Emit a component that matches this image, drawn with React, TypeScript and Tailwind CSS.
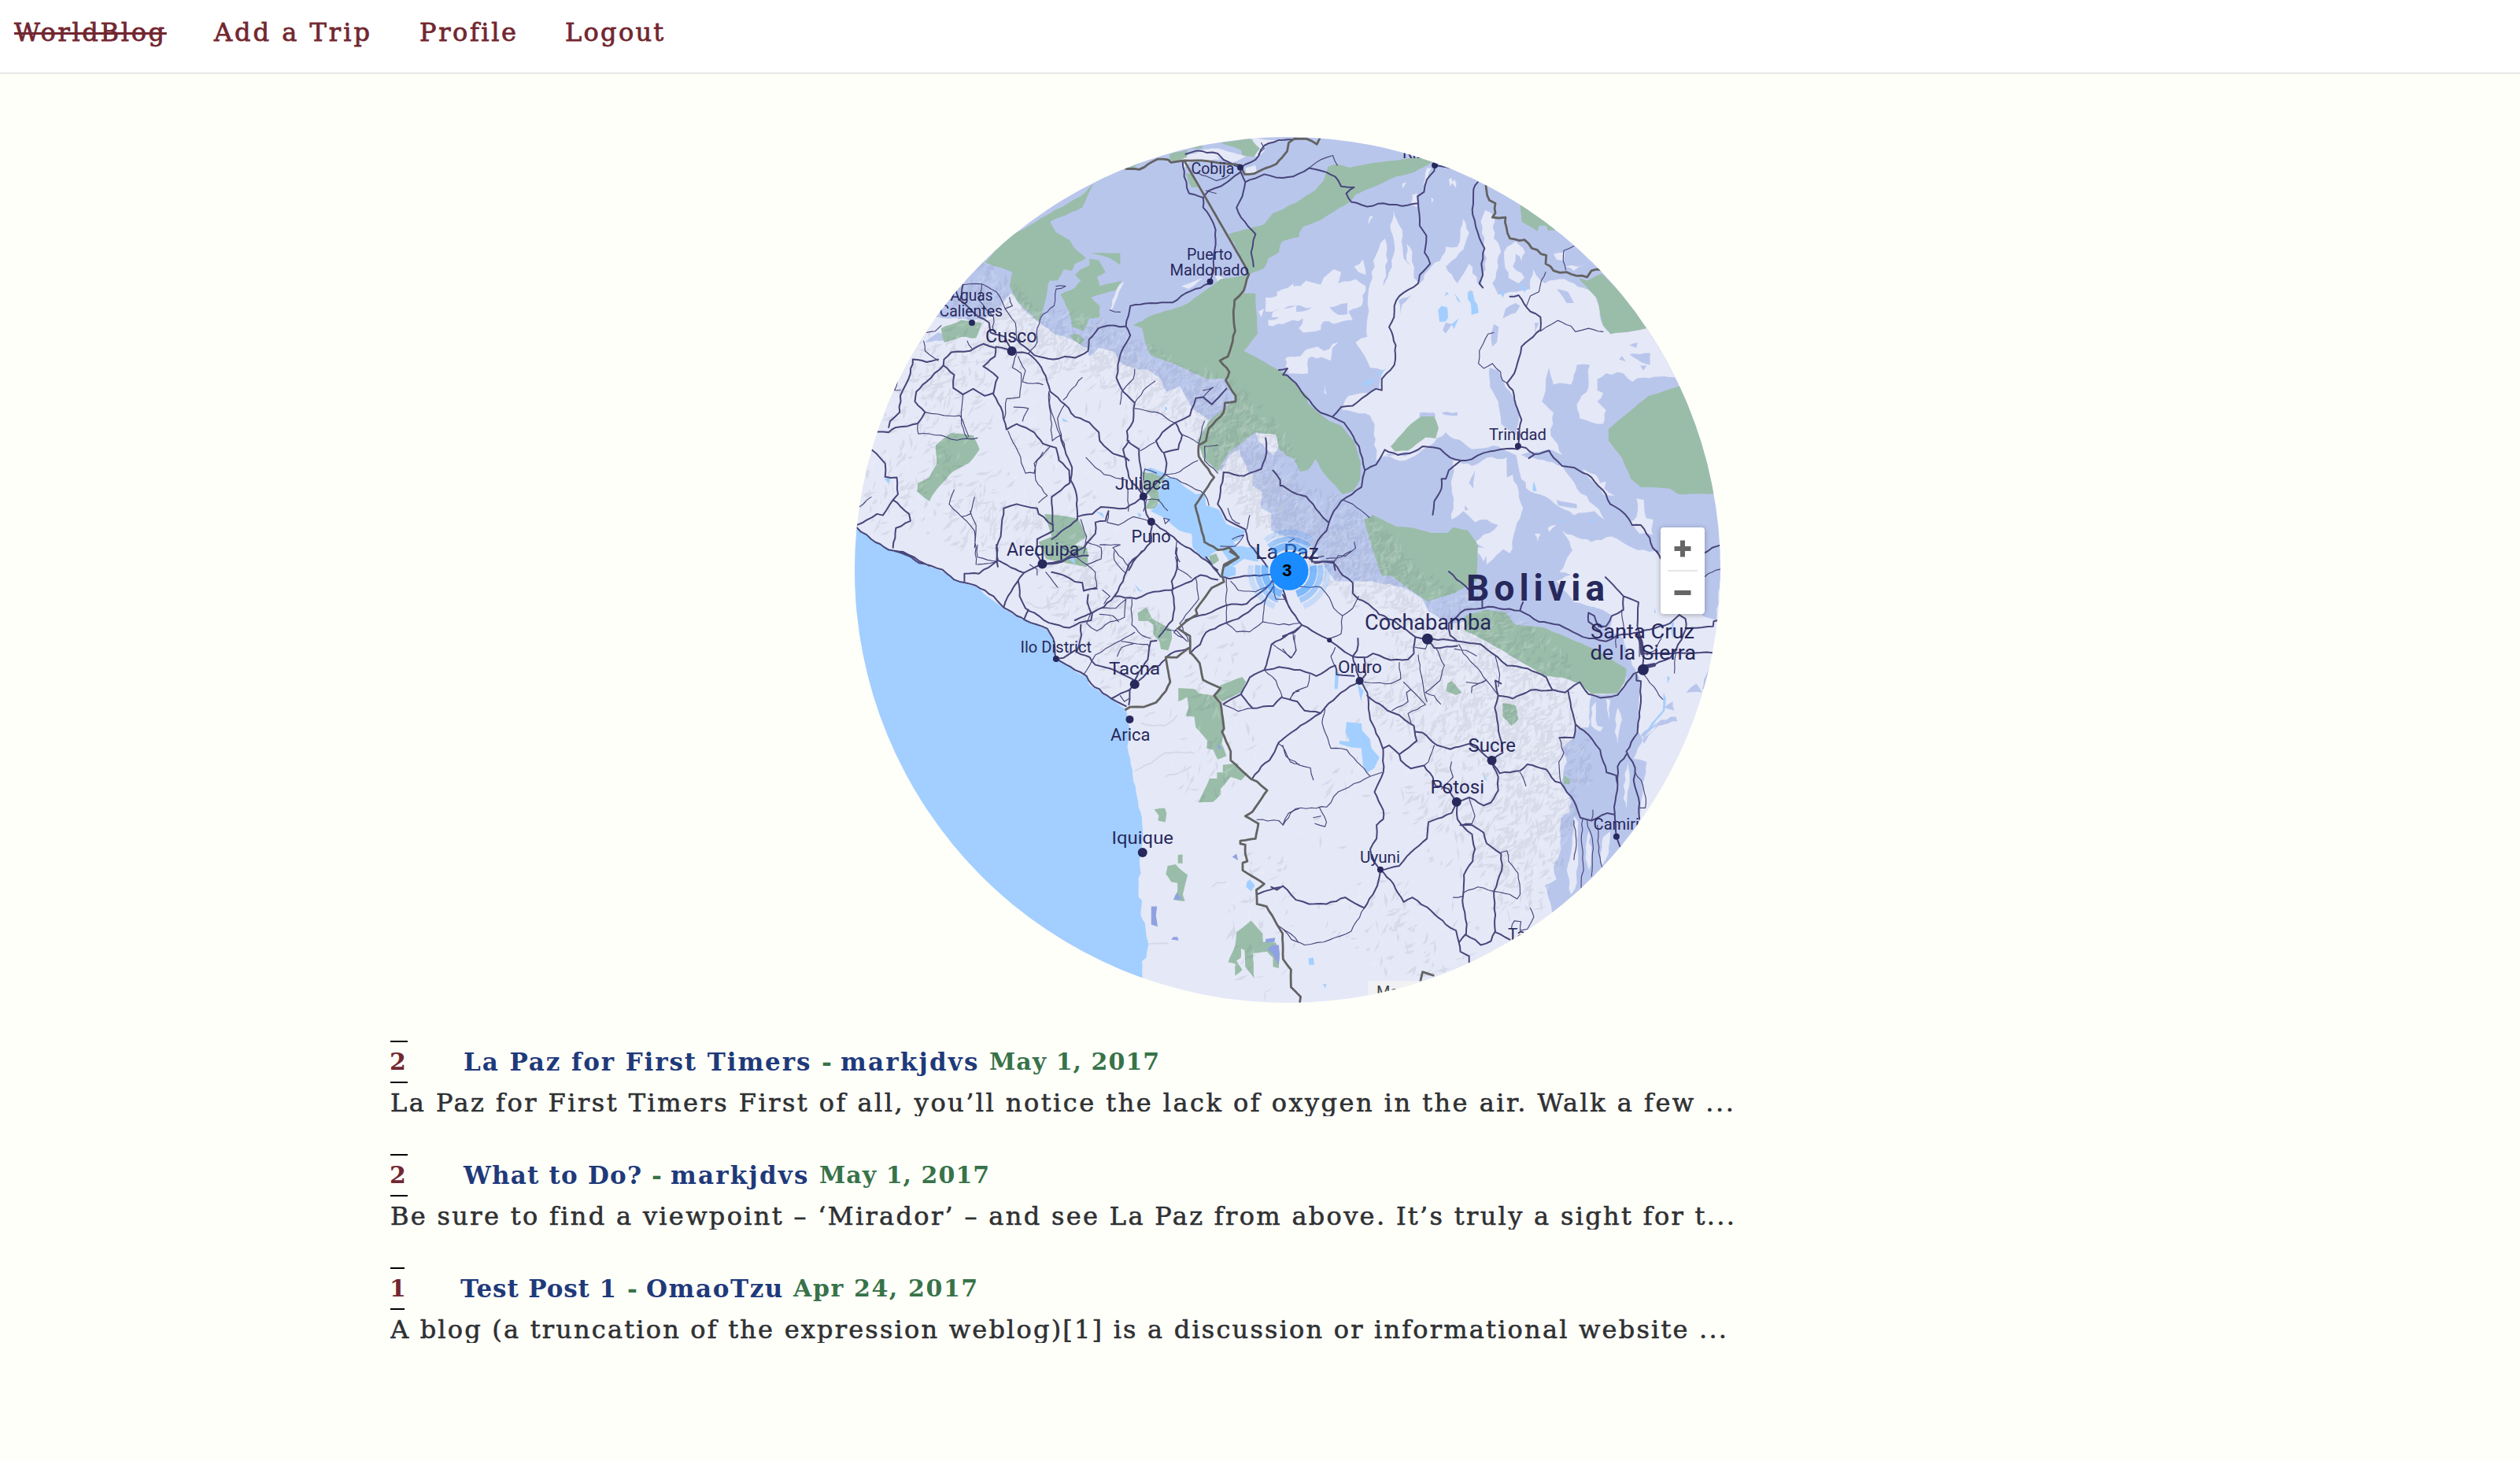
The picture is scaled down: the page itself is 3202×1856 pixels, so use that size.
import React from "react";

type Pt = [number, number];
type Tile = { ox: number; oy: number; sx: number; sy: number };

// The map is stored as four tiles, each with its own local grid.
const NW: Tile = { ox: 1070, oy: 160, sx: 2.7034, sy: 2.8 };
const NE: Tile = { ox: 1630, oy: 160, sx: 2.7034, sy: 2.8 };
const SW: Tile = { ox: 1070, oy: 700, sx: 2.7034, sy: 2.6133 };
const SE: Tile = { ox: 1630, oy: 700, sx: 2.7034, sy: 2.6133 };

let seed = 7;
const rnd = () => {
  seed = (seed * 1103515245 + 12345) % 2147483648;
  return seed / 2147483648;
};

const project = (t: Tile, s: string): Pt[] =>
  s.trim().split(/\s+/).map((p) => {
    const [x, y] = p.split(",").map(Number);
    return [t.ox + x / t.sx, t.oy + y / t.sy];
  });

// Gives every closed ring the same winding so that overlapping rings merge.
const orient = (pts: Pt[]): Pt[] => {
  let area = 0;
  pts.forEach(([x, y], i) => {
    const [u, v] = pts[(i + 1) % pts.length];
    area += x * v - u * y;
  });
  return area < 0 ? [...pts].reverse() : pts;
};

const roughen = (pts: Pt[], amp: number): Pt[] => {
  const out: Pt[] = [pts[0]];
  for (let i = 1; i < pts.length; i++) {
    const [ax, ay] = pts[i - 1];
    const [bx, by] = pts[i];
    const len = Math.hypot(bx - ax, by - ay);
    const n = Math.max(1, Math.round(len / 7));
    for (let k = 1; k < n; k++) {
      const f = k / n;
      const o = (rnd() - 0.5) * amp * 2;
      out.push([ax + (bx - ax) * f - ((by - ay) / len) * o, ay + (by - ay) * f + ((bx - ax) / len) * o]);
    }
    out.push([bx, by]);
  }
  return out;
};

const toPath = (pts: Pt[], close: boolean) =>
  "M" + pts.map(([x, y]) => x.toFixed(1) + " " + y.toFixed(1)).join("L") + (close ? "Z" : "");

const build = (t: Tile, list: string[], amp: number, close: boolean) =>
  list.map((s) => {
    const p = close ? orient(project(t, s)) : project(t, s);
    return toPath(roughen(close ? [...p, p[0]] : p, amp), close);
  }).join("");

const lowland =
  build(NW, [
    "-50,690 330,680 400,686 490,690 545,640 580,595 620,650 680,700 720,735 760,748 800,765 845,790 850,820 880,790 930,800 960,845 1000,860 1060,872 1090,895 1115,945 1160,925 1180,965 1200,1000 1240,1030 1270,1050 1300,1230 1330,1170 1365,1150 1365,1215 1410,1240 1410,1280 1440,1300 1440,1360 1490,1390 1520,1440 1620,1450 1620,-50 -50,-50",
    "285,770 330,735 370,750 340,765",
  ], 1.2, true) +
  build(NE, ["-40,-50 1650,-50 1650,1620 180,1620 100,1500 -40,1440"], 0, true) +
  build(SE, [
    "150,-10 200,40 250,70 290,100 370,110 420,125 480,160 500,200 540,225 600,240 640,230 700,290 1050,330 1180,420 1160,470 1060,480 1050,585 1010,590 995,625 960,655 975,700 955,770 990,830 985,870 955,885 950,930 955,990 930,1050 940,1090 900,1110 925,1200 1000,1220 1225,1000 1225,880 1250,700 1205,690 1240,620 1290,570 1240,640 1220,600 1225,420 1200,380 1170,290 1120,260 1130,215 1040,170 950,120 1000,90 880,-10",
    "1110,-10 1200,20 1240,90 1280,70 1230,30 1240,-10",
    "1440,-10 1440,215 1490,230 1510,-10",
    "1385,470 1420,440 1440,470", "1230,610 1300,560 1350,550 1355,565 1290,580 1240,620", "1310,520 1340,500 1345,530", "1440,460 1470,360 1480,440",
  ], 1.5, true);

const clearing =
  build(NE, [
    "320,1190 315,1060 300,1030 205,1010 225,960 270,950 330,935 345,870 300,860 270,800 250,770 290,750 300,560 320,460 350,400 360,480 345,570 365,520 385,440 370,370 380,300 410,370 415,470 450,500 450,540 470,560 510,500 540,480 560,430 600,430 620,330 640,380 620,440 580,480 560,500 600,560 640,490 680,570 700,470 690,420 680,340 695,300 725,320 725,400 745,430 740,500 720,560 740,600 800,590 850,580 860,510 900,560 950,545 1000,560 1060,590 1090,650 1100,710 1130,740 1250,720 1360,900 1310,890 1240,895 1200,910 1170,880 1110,880 1080,900 1080,940 1100,950 1080,980 1110,1010 1100,1060 1020,1040 1010,990 1050,930 1055,850 1010,850 990,920 930,920 915,860 890,980 930,1020 920,1100 960,1170 910,1150 860,1160 800,1170 740,1140 650,1150 560,1090 530,1110 500,1140 420,1190 350,1175",
    "-20,590 30,575 60,570 80,550 130,565 140,540 175,510 200,520 190,560 250,545 285,570 270,640 225,660 240,690 190,700 140,695 130,725 70,735 55,720 70,685 0,705 -50,710 -50,690 30,670 100,645 40,640 -60,660 -60,610 -20,605",
    "10,825 60,820 80,795 120,785 140,800 190,770 170,790 165,835 100,820 60,845 10,880",
    "585,1190 650,1210 700,1180 770,1180 790,1240 825,1360 800,1430 780,1520 740,1500 700,1560 690,1500 660,1480 740,1420 700,1400 660,1410 620,1370 580,1400",
    "800,1165 860,1180 960,1210 1010,1290 1070,1350 1105,1400 1070,1370 1000,1385 920,1330 850,1300 810,1240",
    "960,1440 1060,1480 1130,1460 1200,1500 1300,1520 1360,1568 1360,1640 960,1640 1040,1560 990,1500",
    "1215,1325 1240,1330 1248,1395 1272,1400 1270,1455 1225,1450 1190,1410 1215,1390",
    "1030,1220 1075,1240 1090,1270 1110,1265 1105,1290 1140,1315 1100,1310", "245,500 275,475 285,530 260,520", "300,320 310,322 295,352", "410,205 425,200 412,222",
    "570,190 580,185 575,215", "590,190 594,220 580,200", "445,245 462,240 460,290 440,275", "495,150 510,150 495,200 482,210", "930,455 970,450 965,480 940,475",
    "970,500 1035,495 1000,515", "865,1450 885,1450 875,1478", "910,1430 940,1420 915,1445", "145,920 150,955 142,950", "510,255 518,262 512,275",
    "770,430 800,410 832,450 820,480 800,455 790,500 830,540 810,560 775,540 760,470", "425,420 445,450 450,520 425,480",
  ], 2, true) +
  build(NW, [
    "1430,660 1450,650 1440,680", "1480,660 1560,640 1560,660 1500,705 1510,680 1475,680", "1450,630 1500,600 1550,560 1550,590 1500,630",
    "1520,830 1600,810 1600,880 1530,880 1550,850", "1410,45 1470,50 1560,45 1460,60 1450,90 1430,110 1390,105 1340,130 1230,85 1290,80 1380,105 1420,80",
    "1385,150 1420,140 1425,165 1390,170", "1160,115 1250,82 1300,120 1200,125 1175,150", "920,655 945,570 970,552 945,610 930,650",
    "1165,570 1240,540 1190,580", "1280,530 1310,540 1290,560", "1365,1155 1300,1235 1400,1240", "1420,1090 1495,1098 1500,1140 1480,1170 1450,1140 1430,1120",
  ], 1, true) +
  build(SE, [
    "1000,-10 950,70 990,80 940,100 1000,170 1100,190 1130,150 1230,160 1300,90 1280,70 1240,90 1200,20 1110,-10",
    "660,-10 760,-10 720,30 700,10 690,35", "1060,520 1075,500 1080,580 1100,585 1090,600 1060,580", "1110,490 1125,495 1120,560", "1150,520 1165,560 1150,640 1140,600",
    "1000,880 1015,900 1010,1100 990,1140 975,1060 990,1000", "1100,950 1125,930 1120,1000 1090,1060", "1185,700 1190,780 1178,860 1170,780", "1050,930 1060,1000 1050,1080 1042,1000",
  ], 1.5, true);

const islands =
  build(NE, [
    "710,860 740,870 765,930 790,960 812,1040 800,1100 750,1060 740,980 712,930", "755,685 765,650 800,630 815,640 800,665", "560,700 582,705 560,738 550,728",
    "445,600 410,635 405,670 398,620", "160,645 222,630 222,670 190,672", "1190,812 1262,808 1262,850 1230,840", "1155,830 1165,818 1178,838", "1190,780 1218,770 1215,790", "1228,853 1250,853 1238,870",
    "725,705 742,715 735,770 720,785 715,740", "940,580 980,590 1000,630 975,630", "865,700 880,700 865,735", "640,583 655,590 640,610", "545,1020 600,1018 600,1030 555,1028",
    "768,1185 800,1190 830,1290 800,1270 790,1240 770,1250", "640,1270 660,1225 655,1290", "625,1350 638,1365 625,1368", "940,1330 1010,1345 1010,1360 945,1350",
    "470,1020 520,1020 525,1035 470,1040", "350,1170 420,1175 480,1150 400,1165",
  ], 1, true);

const parks =
  build(NW, [
    "490,485 565,400 715,310 820,250 865,205 825,290 715,340 735,378 780,405 795,430 838,470 800,490 790,515 762,510 740,550 712,550 680,700 640,660 600,620 575,570 585,520",
    "820,510 850,495 850,472 882,478 905,520 875,537 885,570 960,550 940,585 855,610 885,640 885,680 848,685 830,730 790,715 780,660 750,600 800,575 820,550 800,530",
    "855,452 955,452 955,495 920,470", "780,745 810,740 832,760 820,778 800,765",
    "1000,710 1060,675 1180,635 1300,545 1390,530 1380,595 1420,596 1427,740 1380,800 1435,830 1520,880 1600,960 1600,1230 1568,1170 1540,1180 1500,1150 1490,1098 1420,1090 1330,1160 1290,1230 1240,1180 1220,1120 1260,1050 1310,1010 1350,975 1320,900 1250,900 1150,850 1060,815 1040,770 1030,720",
    "1328,385 1450,350 1480,310 1570,268 1570,395 1510,410 1500,450 1465,470 1450,505 1395,530 1380,480",
    "340,720 410,690 480,700 460,755 410,750 350,770", "1180,170 1200,170 1222,218 1200,218", "1300,60 1400,45 1435,80 1415,110 1375,105 1370,85", "1125,100 1185,85 1185,110 1160,122 1125,125",
    "980,145 1025,132 1000,150", "1190,80 1240,68 1235,80", "375,1092 450,1100 472,1150 435,1200 380,1230 320,1300 300,1335 258,1300 260,1270 300,1250 325,1200 322,1135",
    "1030,1230 1115,1240 1085,1290 1090,1330 1080,1360 1040,1360 1060,1320 1035,1290", "695,1380 810,1395 840,1460 800,1490 845,1515 840,1568 800,1560 700,1540 675,1480 720,1460",
    "1260,1530 1285,1520 1295,1545 1265,1565",
  ], 0.7, true) +
  build(NE, [
    "-20,310 0,300 110,230 140,195 155,145 185,135 230,148 290,135 400,120 470,112 515,128 450,165 390,180 250,245 230,270 130,335 70,358 50,390 0,412 -20,416",
    "815,280 870,310 940,370 910,372 905,355 880,355 875,375 820,340", "1015,540 1045,550 1095,525 1180,610 1250,720 1200,730 1125,740 1100,710 1080,615",
    "1375,922 1255,960 1118,1078 1118,1118 1165,1180 1195,1255 1230,1285 1330,1290 1360,1310 1500,1308 1480,1140",
    "370,1140 440,1060 475,1033 520,1033 535,1075 525,1112 490,1108 430,1155 385,1158",
    "-40,880 0,900 90,990 160,1050 200,1065 245,1120 268,1200 265,1260 240,1300 205,1310 140,1235 112,1185 90,1220 60,1230 40,1190 0,1130 -40,1080",
    "278,1400 310,1385 390,1425 450,1430 510,1448 565,1448 585,1428 635,1438 665,1480 668,1568 668,1600 340,1600 310,1510",
  ], 0.5, true) +
  build(SE, [
    "315,-20 670,-20 665,100 590,140 495,167 440,130 370,80 355,40", "625,215 700,195 765,205 800,245 900,255 1080,330 1180,390 1175,435 1150,472 1060,475 1020,440 960,420 900,415 830,375 700,300 650,275 625,265",
    "565,440 580,432 615,470 595,478 562,465", "755,505 800,512 810,560 785,580 755,550", "965,745 985,755 985,772 965,775",
  ], 0.5, true) +
  build(SW, [
    "1015,205 1045,187 1065,225 1130,260 1133,290 1120,330 1095,325 1090,300 1068,275 1070,245 1050,232 1018,232", "1155,455 1210,458 1225,472 1275,480 1300,510 1312,600 1305,640 1320,680 1290,692 1275,660 1252,655 1255,630 1215,585 1210,550 1180,548 1190,520 1185,485 1155,500",
    "1300,445 1375,418 1388,435 1370,470 1305,500 1280,480", "1308,710 1360,705 1362,725 1392,738 1370,762 1335,750 1300,790 1300,810 1275,833 1225,835 1262,755 1288,755 1288,735 1308,735",
    "1072,858 1108,853 1115,870 1110,900 1085,895 1088,878", "1154,1008 1170,1008 1170,1037 1154,1037", "1118,1045 1145,1040 1160,1055 1187,1075 1170,1140 1178,1163 1138,1158 1152,1130 1152,1102 1130,1098 1112,1072",
    "1405,1227 1445,1270 1445,1297 1490,1300 1503,1340 1500,1385 1480,1380 1480,1350 1460,1330 1412,1335 1415,1418 1385,1380 1382,1325 1370,1320 1370,1350 1355,1360 1375,1390 1350,1410 1350,1370 1326,1365 1350,1310 1355,1265",
    "700,-20 800,-20 842,-10 842,30 825,45 795,40 790,20 740,25",
  ], 0.4, true);

const industrial = build(SW, [
  "1062,1180 1082,1180 1078,1210 1084,1247 1062,1240", "1130,1290 1138,1281 1152,1281 1156,1293", "1460,1320 1480,1308 1500,1308 1503,1340 1500,1375 1480,1340", "1455,1288 1488,1284 1485,1298 1455,1300",
  "1340,1015 1355,1005 1360,1027", "1138,1158 1150,1135 1168,1155", "1288,655 1297,640 1303,657",
], 0, true);

const water =
  build(SW, [
    "-60,-60 40,-30 155,0 220,12 265,40 330,60 385,95 460,118 505,155 555,192 620,228 700,258 722,290 738,355 800,400 840,418 850,445 925,490 975,525 985,560 990,610 980,650 990,690 998,745 1010,800 1018,850 1030,885 1032,960 1022,1030 1026,1070 1018,1085 1018,1148 1030,1160 1026,1210 1040,1235 1045,1280 1052,1310 1045,1350 1030,1362 1030,1500 -60,1600",
    "1005,110 1035,138 1015,130", "1390,1100 1400,1090 1418,1110 1405,1130 1388,1115", "1305,60 1320,40 1352,55 1352,80 1310,90",
  ], 0.7, true) +
  build(NW, [
    "-60,1400 50,1430 130,1490 220,1530 310,1580 -60,1600",
    "1035,1225 1060,1215 1110,1235 1100,1250 1140,1250 1185,1290 1215,1310 1245,1305 1250,1350 1295,1365 1320,1415 1385,1440 1370,1470 1345,1480 1355,1495 1430,1500 1430,1550 1380,1540 1340,1568 1300,1500 1260,1530 1250,1545 1205,1500 1200,1450 1160,1440 1100,1390 1060,1370 1090,1340 1088,1290 1110,1250",
    "145,1255 165,1252 160,1272", "870,1370 895,1378 900,1395", "755,1038 778,1052 760,1052", "1015,1375 1030,1385 1018,1390", "1108,998 1118,1003 1110,1015", "780,1540 800,1530 800,1560",
  ], 0.7, true) +
  build(NE, [
    "533,655 545,640 565,645 568,680 560,695 538,697", "635,590 655,598 658,620 668,635 672,665 648,672 645,630 635,615", "590,595 612,630 600,622", "605,685 588,722 580,705", "746,592 764,588 756,612", "810,562 838,578 830,592",
    "275,915 315,895 305,915 280,928", "320,885 355,862 335,888", "862,1265 872,1300 858,1298", "1050,1410 1075,1390 1065,1408", "950,1402 970,1400 958,1412", "556,605 562,590 570,597",
  ], 0.4, true) +
  build(SE, [
    "218,568 270,572 272,595 300,625 305,655 332,685 315,720 290,735 275,710 270,655 235,652 195,640 195,630 230,632 215,600", "180,390 193,405 188,458 178,458", "258,440 278,465 270,485 274,515 262,470",
    "88,1352 105,1350 108,1374 90,1374", "137,1438 150,1438 146,1452", "688,735 703,765 692,755", "1308,470 1316,490 1312,530 1285,560 1240,615 1268,570 1305,530", "1335,240 1343,235 1340,290 1335,270", "1320,415 1330,420 1322,440", "1276,190 1282,205 1276,205",
  ], 0.4, true);

const majorRoads =
  build(NW, [
    "120,1088 160,1090 185,1072 225,1068 260,1058 285,1018 250,980 255,945 290,910 348,852 385,885 382,932 415,955 450,935 490,960 520,950 528,910 535,895 485,855 525,820 528,790 485,775 440,800 375,805 350,830 348,852",
    "160,1072 165,1050 198,1018 200,960 235,880 243,830 290,840 330,830", "583,801 640,810 675,845 700,890 715,945 765,990 800,1035 850,1055 882,1090 885,1120 930,1165 975,1180 985,1190",
    "583,801 528,785", "415,565 405,620 470,680 505,700 510,735 560,750 583,801", "600,760 660,815 725,830 765,820 800,825 845,800 848,760 880,720 915,710 975,713 990,640 1060,630 1135,628 1180,595 1264,560 1275,520 1280,440 1283,370 1265,325 1240,290 1240,255",
    "975,713 990,745 965,790 952,830 942,895 965,945 1005,985 1000,1050 978,1085 980,1120 1020,1150 1025,1210 1030,1290 1035,1318", "520,955 545,1000 565,1080 600,1060 660,1090 690,1130 735,1145 745,1190 780,1225 782,1270 720,1320 725,1440 670,1470 665,1520 688,1558",
    "750,1100 765,1150 790,1215 785,1260 805,1310 808,1400 770,1430 720,1470", "808,1390 860,1380 890,1355 975,1360 1035,1318 1045,1380 1062,1408 1110,1440 1150,1475 1210,1515 1250,1545 1290,1580",
    "985,1120 965,1150 975,1190 985,1250 1035,1318", "50,1420 120,1380 140,1385 175,1330 192,1310 188,1250 148,1248 148,1200 103,1153", "50,1428 100,1470 160,1508 210,1515 300,1565", "175,1500 185,1430 235,1405 230,1380 175,1330",
    "535,1568 530,1500 545,1460 555,1360 600,1345 670,1360 675,1380 725,1420", "1320,935 1270,990 1240,965 1215,968 1195,1030 1145,1055 1168,1100 1155,1150 1105,1162 1115,1200 1110,1235 1035,1318",
    "1062,1408 1062,1480 1000,1550 985,1580", "1100,1160 1078,1120 1100,1090 1145,1055", "1455,1110 1458,1160 1440,1220 1380,1245 1310,1232 1300,1300 1290,1345 1320,1400 1385,1435 1400,1490 1460,1568",
    "1480,1225 1505,1260 1505,1280 1514,1280", "1180,100 1218,88 1290,98 1310,120 1368,148 1420,120 1450,70 1500,50 1568,45", "1170,125 1175,180 1192,240 1240,255 1260,230 1300,215 1368,165", "1368,160 1385,200 1450,172 1490,183 1514,185",
    "1385,200 1375,250 1355,290 1370,325 1420,385 1405,450 1413,500", "1500,868 1530,862 1515,885", "688,1558 760,1545 830,1500 870,1450 870,1410 905,1405 915,1370",
  ], 0.9, false) +
  build(NE, [
    "0,185 35,180 90,150 150,165 180,180 200,215 245,218 218,240 235,270 290,287 345,275 410,285 465,275", "522,140 520,160 495,190 485,235 463,250 470,355 493,390 487,450 506,490 470,530 465,560 400,605 383,640 382,680 365,715 388,780 383,850 340,900 340,940 320,935 240,995 200,1000 170,1035",
    "522,140 575,150", "670,200 655,225 652,315 670,380 693,435 682,490 687,530 675,560 687,575", "780,607 810,602 850,660 885,680 885,725 860,750 820,785 810,830 795,880 770,915 790,940 800,990 820,1045 812,1080 808,1139",
    "0,885 15,887 45,915 75,960 130,1020 170,1035 210,1055 262,1140 282,1225 275,1250 270,1285 200,1335 175,1370 160,1405 150,1440 120,1475 105,1510", "282,1225 320,1205 350,1152 395,1170 435,1165 480,1140 540,1148 575,1180 612,1190 650,1185 690,1163 750,1150 808,1150 808,1139 835,1145 865,1168 915,1155 930,1180 960,1210 1000,1215 1060,1250 1110,1310 1125,1345 1175,1380 1200,1420 1230,1420 1260,1465 1270,1500 1300,1540",
    "612,1190 570,1225 560,1255 545,1255 545,1290 520,1335 515,1383", "0,1280 50,1310 80,1318 125,1375 155,1408", "1450,1518 1475,1500 1500,1492", "845,1182 865,1168", "105,1510 100,1550 175,1550 180,1580",
  ], 0.9, false) +
  build(SW, [
    "180,0 225,15 265,40 345,62 385,95 460,115 520,150 555,188 600,215 630,230 705,258 725,290 735,358 800,395 840,415 855,440 925,490 975,515", "420,100 420,75 470,75 535,30 580,55 625,72 688,44 740,40 790,20 845,15",
    "535,30 530,-20", "625,72 600,105 570,150 555,188", "605,100 610,150 630,190 660,205 710,238 780,255 815,238 855,230 860,205 900,185 935,150 1010,158 1070,135 1130,130 1200,100 1230,80 1290,95",
    "820,245 822,280 805,335 850,352 870,378 920,390 1005,430", "625,228 640,195", "735,358 760,355 800,330", "1005,442 988,460 985,510", "925,490 990,460", "1005,430 1020,400 1050,360 1060,300 1080,298",
    "1088,285 1135,230 1142,190 1132,100 1150,60 1150,-10", "720,70 760,80 800,102 825,105 830,132 875,125", "845,145 842,170 855,205", "935,150 965,100 985,45 1030,0", "1250,20 1300,85 1330,92 1400,82 1470,78",
    "1180,230 1250,210 1320,180 1390,175 1420,150 1470,110 1480,95", "1195,340 1230,310 1250,270 1310,242 1360,225 1410,190 1455,160 1480,120", "1195,320 1130,340 1110,360 1090,380 1060,390 1020,430",
    "1310,508 1370,475 1400,420 1450,395 1475,310 1520,285 1568,255", "1450,395 1500,385 1514,387", "1370,475 1410,522 1480,515 1510,485", "1408,757 1440,715 1468,695 1500,635 1514,625", "1425,1140 1450,1130 1510,1115",
    "1515,130 1530,175 1545,200", "800,230 858,205",
  ], 0.9, false) +
  build(SE, [
    "0,145 30,200 65,245 155,292 200,325 240,350 264,431 290,470 300,560 330,620 345,660 345,735 315,800 345,860 345,890 322,910 322,955 300,990 305,1020 335,1058 325,1110 280,1185 215,1150 150,1172 90,1172 45,1158 0,1112 -20,1125 -40,1115",
    "65,245 40,270 0,283", "85,20 110,40 140,35 175,40 205,80 240,105 240,140 260,160 275,165 310,190 330,210 380,230 455,285 497,292 570,295 605,300 680,310 720,340 770,380 840,390 905,420 925,460 970,470 1020,435 1050,475 1090,487 1150,478 1205,408 1238,394",
    "455,285 450,340 430,360 370,362 310,340 290,352 240,350", "-1,387 60,395 115,415 180,380 185,410 245,415", "280,355 285,410 264,431", "-1,487 50,500 75,530 130,538 145,520 200,470 264,431", "130,538 60,580 -1,625",
    "290,480 360,530 400,545 450,580 460,630 400,675 405,695 440,722 485,712 515,750 525,780 570,790 597,833 640,818 690,845 715,835 740,795 740,750 718,700", "345,655 365,645 400,675", "455,600 480,603 530,645 575,658 640,640 670,655 718,695 755,670 740,580 728,520 740,480 730,430 750,440",
    "740,480 790,490 850,462 925,462", "745,738 815,730 840,708 905,725 935,765 955,770 1000,830 1022,885 1060,895 1115,870 1138,875", "718,700 745,738", "597,833 580,870 500,900 495,955 440,1000 400,1045 335,1058 380,1105 415,1165 445,1150 510,1195 560,1240 595,1260 605,1300 610,1330 640,1345 640,1365",
    "600,840 600,890 620,915 650,940 660,990 652,1030 622,1075 617,1160 632,1240 630,1270 605,1300", "610,910 650,910 690,935 700,970 750,1005 752,1060 725,1130 730,1265 780,1290", "630,1275 660,1290 680,1308 715,1295 730,1262", "500,300 520,322 600,315",
    "570,240 575,280 600,300", "570,240 625,195 685,190 705,185 815,198 825,170", "570,68 640,130", "685,165 685,190", "815,198 880,235 950,245 1030,285 1110,300 1150,280 1225,270", "1108,87 1170,150 1170,195 1130,215 1110,250 1085,250 1070,215 1050,205 1050,235 1090,265",
    "1170,150 1222,170 1218,250 1238,320 1238,394", "1225,270 1330,240 1362,212 1383,225 1385,258 1478,250 1480,233 1495,230", "1240,340 1475,338", "1238,394 1330,355 1350,330 1385,258", "1215,410 1215,430 1230,432 1230,500 1218,605 1180,665 1210,720 1205,760 1222,820 1225,890",
    "1180,675 1150,715 1150,775 1138,850 1146,948 1160,985", "980,465 990,520 1005,575 1050,610 1090,660 1112,735 1145,745 1150,775", "1005,575 1000,620 950,620", "1285,0 1298,25", "258,290 255,330 240,350",
  ], 0.9, false);

const minorRoads =
  build(NW, [
    "415,565 480,562 530,590 560,650 595,700 600,760", "480,562 470,620 520,680 520,730", "735,570 768,570 735,580 728,640 690,670 670,720 670,770 640,810", "575,610 585,640 560,650", "600,810 585,860 615,880 610,965 565,970 558,1040",
    "605,820 630,870 620,910 690,920", "710,945 722,1120 750,1100 720,1020 710,945", "760,975 790,935 825,895", "765,990 740,1040 765,1150", "590,1000 640,1005 620,1050", "415,955 410,1060 430,1110", "285,1018 350,1030 405,1030 435,1105", "260,1060 262,1095 340,1100 395,1118 465,1110",
    "340,710 320,730 290,735", "280,765 285,800 330,835", "190,905 180,940 200,940", "570,1085 605,1160 630,1235 660,1235 670,1190 715,1140", "690,1160 660,1200 665,1260 705,1315 675,1340", "838,1180 870,1215 900,1240 980,1260 983,1370", "385,1295 368,1345 410,1390 455,1440 460,1560",
    "455,1320 440,1380 410,1390", "440,1370 460,1420 455,1500", "60,1355 100,1320", "1005,865 1000,900 965,940", "1075,908 1035,940 1005,985", "955,990 960,945", "1005,1005 1080,1018 1140,1055", "1025,1155 1075,1125", "1168,1098 1225,1130 1245,1050", "1222,1190 1160,1230 1110,1240 1185,1275 1245,1310 1260,1350",
    "1290,1135 1245,1140 1245,1190 1290,1235", "1080,1235 1040,1220 1035,1260", "1062,1408 1000,1390 950,1420 910,1410 915,1370", "1085,1330 1118,1368", "1035,1370 1045,1330 1090,1330", "1105,1395 1125,1400 1110,1415 1105,1395", "885,1490 955,1490 930,1500 985,1568",
    "1150,1475 1145,1520 1160,1550", "1340,1470 1380,1455 1350,1495 1300,1495", "1400,1385 1390,1435", "1325,1360 1340,1400 1365,1415", "820,1400 840,1460 830,1520", "465,1560 530,1550", "840,1480 890,1500 890,1540 840,1560", "1220,165 1285,195 1330,175", "1285,240 1250,230", "920,655 955,662", "1240,940 1275,930 1240,965", "430,765 445,790",
    "1440,60 1450,80 1430,100",
  ], 1.1, false) +
  build(NE, [
    "90,150 130,120 172,105 187,140", "903,520 888,550 880,590 850,605 837,640", "1000,427 965,443 963,480 972,512", "885,730 905,715 945,692 990,712 1005,732 1050,720 1100,732", "725,735 705,740 688,775 675,800 672,845 690,862 720,845 748,875 755,905 770,915",
    "205,1330 240,1345 297,1393", "245,1480 250,1502 215,1530 190,1528 170,1555", "20,1480 40,1468", "60,1540 140,1530",
  ], 0.8, false) +
  build(SW, [
    "995,160 995,245 1030,280 1060,290", "1005,270 940,305 870,345 850,380 830,410", "855,205 840,240 875,265 920,235 970,220 975,160 940,190 890,190", "960,300 1050,310 1055,320", "945,350 960,320 1000,308", "885,210 930,215 950,235", "700,70 740,120",
    "465,-20 465,20 535,35", "760,-10 870,70 875,120 830,130", "895,130 920,150 900,175", "935,0 935,30 975,75", "1215,90 1225,160 1160,240 1190,300", "1320,92 1320,240 1355,268 1400,268 1445,235 1455,160", "1445,235 1500,245 1570,240", "1335,100 1360,130 1420,135 1470,110",
    "1480,310 1540,355 1560,330 1555,280", "1450,395 1490,430 1512,485", "1310,510 1360,532 1410,522", "1425,892 1500,895 1515,910 1540,870 1570,855", "1500,640 1520,660 1540,700 1570,708", "1500,1245 1540,1270 1568,1300", "955,480 970,500 985,490", "1540,490 1550,470 1570,465",
    "1110,260 1150,265 1185,300 1140,270 1160,250", "1145,20 1155,60 1200,90", "1480,100 1490,160 1520,160", "645,45 670,60 670,80",
  ], 1.1, false) +
  build(SE, [
    "155,292 200,275 205,215 175,190 160,155 130,120 60,118", "205,215 240,190 260,150", "235,0 200,20 150,25", "180,320 165,350 180,385", "35,270 45,330 30,355 0,325", "25,490 45,465 85,450 92,410", "145,525 135,570 165,655 220,660 255,700 300,748 340,735", "300,748 190,800 150,850 45,855 20,870 0,910",
    "125,850 150,900 145,915 110,905", "105,885 130,880", "0,645 10,680 55,710 95,720 105,760", "280,435 370,440 405,425 400,370", "440,460 490,510 430,540 440,570", "375,530 430,500 425,470 440,460 415,435", "465,345 475,410 495,500", "525,320 555,380 540,430 490,470 520,480 542,508",
    "605,310 620,340 670,390 700,430 740,480", "630,435 670,440 700,428 650,450 648,470", "730,350 745,410 740,450", "580,700 575,720 585,750 545,790", "520,645 500,700 485,712", "640,820 660,880 650,905 610,910", "815,735 835,780", "590,325 630,330 665,348", "455,320 490,325 500,300",
    "950,620 965,670 948,700 955,770", "585,1150 620,1145", "620,1135 670,1115 725,1130 780,1140 805,1155 815,1140 808,1070 775,1030 770,995 750,1000", "785,1255 795,1228 818,1230 815,1260 840,1255 862,1215 850,1185", "0,1255 30,1290 75,1308 140,1298 235,1262 280,1185",
    "1000,895 1008,960 1000,1025", "1030,890 1025,960 1032,1040 1025,1120", "1045,895 1065,970 1060,1080", "1080,910 1085,1000 1097,1050", "1065,860 1060,895", "1210,735 1230,760 1247,820 1245,853 1225,853", "1240,410 1305,492", "1350,340 1345,405", "1450,85 1475,70 1505,60", "1300,290 1280,330 1250,345",
    "1225,270 1225,350", "1145,280 1145,320", "1165,195 1170,280",
  ], 1, false);

const motorway = build(SE, ["1220,280 1230,300 1235,340", "1240,385 1275,378"], 0, false);

const borders =
  build(NW, [
    "972,152 1020,155 1085,118 1120,120 1130,130 1175,123 1255,125 1310,133 1368,140 1382,172 1415,170 1455,150 1492,135 1514,110",
    "1385,500 1397,528 1380,585 1348,620 1345,680 1350,730 1325,820 1298,835 1330,875 1318,905 1352,960 1352,980 1315,985 1310,1020 1260,1075 1250,1120 1225,1135 1225,1175 1278,1250 1245,1300 1213,1350 1245,1480 1290,1508 1330,1500 1362,1535 1310,1568",
  ], 0.7, false) +
  build(NW, ["1175,123 1385,500"], 0, false) +
  build(NE, [
    "-1,110 15,90 20,60 40,45 80,45 117,65 128,42", "697,210 710,265 730,275 730,310 720,325 765,325 768,360 780,400 830,405 855,435 905,460 903,490 930,515 975,520 1045,538 1060,515 1095,512",
  ], 1.6, false) +
  build(SW, [
    "1330,0 1362,20 1312,45 1305,80 1312,102 1270,122 1215,195 1220,210 1180,235 1155,258 1195,282 1195,335 1228,372 1240,428 1300,455 1278,480 1300,505 1312,590 1305,600 1335,665 1335,695 1405,757 1425,765 1460,795 1410,865 1385,880 1430,905 1420,955 1368,962 1368,972 1385,975 1385,1005 1392,1030 1376,1035 1376,1060 1450,1105 1423,1125 1425,1172 1458,1180 1513,1270 1515,1355 1542,1390 1542,1448 1575,1480 1572,1500",
    "972,528 988,518 1035,518 1078,503 1112,465 1127,435 1112,352 1150,353 1192,322",
  ], 0.3, false) +
  build(SE, ["472,1430 480,1397 520,1410"], 0, false);

// Hill shading: scattered facets inside elongated zones [cx, cy, rx, ry, tilt, count].
const shade = (zones: number[][]) => {
  let d = "";
  for (const [cx, cy, rx, ry, tilt, n] of zones) {
    const c = Math.cos(tilt), s = Math.sin(tilt);
    for (let i = 0; i < n; i++) {
      const a = rnd() * Math.PI * 2;
      const r = Math.pow(rnd(), 0.65);
      const px = Math.cos(a) * r * rx, py = Math.sin(a) * r * ry;
      const x = cx + px * c - py * s, y = cy + px * s + py * c;
      const l = 3 + rnd() * 8, w = 1 + rnd() * 3, t = -0.9 + (rnd() - 0.5) * 1.8;
      const ux = Math.cos(t), uy = Math.sin(t);
      d += `M${(x - ux * l).toFixed(1)} ${(y - uy * l).toFixed(1)}L${(x - uy * w).toFixed(1)} ${(y + ux * w).toFixed(1)}L${(x + ux * l).toFixed(1)} ${(y + uy * l).toFixed(1)}L${(x + uy * w * 0.3).toFixed(1)} ${(y - ux * w * 0.3).toFixed(1)}Z`;
    }
  }
  return d;
};
const zones = [
  [1260, 390, 130, 40, 0.75, 280], [1190, 490, 90, 60, -0.9, 150], [1440, 470, 150, 38, 0.5, 420], [1580, 560, 110, 45, 0.9, 340], [1160, 620, 70, 60, -0.5, 90],
  [1260, 660, 70, 40, 0, 90], [1380, 740, 70, 55, 0.6, 130], [1600, 620, 80, 35, 0.9, 220], [1700, 690, 130, 50, 0.6, 460], [1850, 800, 170, 50, 0.45, 420],
  [1830, 890, 110, 60, 0.3, 330], [1930, 900, 70, 60, 0.6, 180], [1960, 960, 60, 110, -0.1, 300], [1930, 1080, 60, 90, 0.1, 200], [1860, 1000, 80, 110, 0, 170],
  [1420, 820, 70, 50, -0.5, 90], [1540, 900, 60, 120, 0.1, 70], [1600, 1170, 50, 100, 0, 45], [1780, 1180, 110, 60, 0.3, 80], [1310, 560, 180, 110, 0.5, 110], [1690, 980, 100, 100, 0, 20],
];
const darkFacets = shade(zones);
const lightFacets = shade(zones.map((z) => [z[0], z[1], z[2], z[3], z[4], z[5] * 0.5]));

const ranges = build(SW, [
  "1005,730 1060,705 1110,670 1160,668 1210,672", "1110,750 1160,735 1200,715", "1025,570 1070,580 1110,580 1150,545", "1040,550 1075,535", "690,190 740,170 760,150", "940,290 980,270", "1050,1305 1120,1303", "1270,1115 1290,1100 1320,1098", "630,170 660,185 690,190",
], 1.5, false);

const labels: [string, number, number, number, number][] = [
  ["Cobija", 1513.5, 1568.3, 220.5, 20], ["Puerto", 1508, 1566, 329.5, 20], ["Maldonado", 1486.5, 1587, 349.5, 20], ["Aguas", 1207.5, 1261.5, 381.5, 20], ["Calientes", 1193.5, 1274, 401.5, 20],
  ["Cusco", 1252, 1317.5, 434.5, 23], ["Juliaca", 1417, 1487, 621.5, 22], ["Puno", 1437.5, 1487.5, 688.5, 22], ["Arequipa", 1279, 1371.5, 705.5, 24], ["La Paz", 1595, 1676, 710, 25],
  ["Trinidad", 1892, 1965, 558.5, 20], ["Riberalta", 1782, 1862, 201, 20], ["Ilo District", 1296.5, 1387, 828.5, 20], ["Tacna", 1409, 1474, 856.5, 22], ["Arica", 1411, 1461.5, 940.5, 22],
  ["Iquique", 1412.5, 1491, 1071.5, 22], ["Cochabamba", 1734, 1895, 800, 27], ["Santa Cruz", 2021, 2153, 811, 26], ["de la Sierra", 2020.5, 2155, 838, 26],
  ["Oruro", 1700, 1756, 855, 22], ["Sucre", 1865.5, 1926, 954.5, 23], ["Potosi", 1817.5, 1886, 1007.5, 23], ["Uyuni", 1728, 1779, 1096, 20], ["Camiri", 2024.5, 2083, 1054, 20], ["Tarija", 1916, 1967, 1194, 20],
];

const dots: [Tile, string, number][] = [
  [NW, "1368,148", 4], [NW, "1264,554", 4], [NW, "446,700", 4], [NW, "583,801", 6], [NW, "1035,1318", 5], [NW, "1062,1408", 5], [NW, "688,1558", 6],
  [NE, "522,140", 4], [NE, "808,1139", 4], [SW, "735,358", 4], [SW, "1005,442", 6], [SW, "988,559", 5], [SW, "1032,1001", 6],
  [SE, "497,292", 7], [SE, "264,431", 5], [SE, "1238,394", 7], [SE, "718,695", 6], [SE, "597,833", 6], [SE, "335,1058", 4], [SE, "1146,948", 4], [SE, "160,296", 3],
];

const arc = (r: number, mid: number, half: number) => {
  const a = ((mid - half) * Math.PI) / 180, b = ((mid + half) * Math.PI) / 180;
  return `M${1638 + r * Math.cos(a)} ${725 + r * Math.sin(a)}A${r} ${r} 0 0 1 ${1638 + r * Math.cos(b)} ${725 + r * Math.sin(b)}`;
};

function WorldMap() {
  return (
    <svg viewBox="1086 174 1100 1100" className="block size-full font-['Roboto',sans-serif]">
      <rect x="1086" y="174" width="1100" height="1100" fill="#e5e8f6" />
      <path d={lowland} fill="#b9c6ec" />
      <path d={clearing} fill="#e5e8f6" />
      <path d={islands} fill="#b9c6ec" />
      <path d={parks} fill="#9abda9" />
      <path d={darkFacets} fill="#5b6478" opacity="0.1" />
      <path d={lightFacets} fill="#ffffff" opacity="0.14" />
      <path d={ranges} fill="none" stroke="#d3d7e6" strokeWidth="1.6" />
      <path d={industrial} fill="#8ea2e2" />
      <path d={water} fill="#a2cfff" />
      <g fill="none" stroke="#47457a" strokeLinejoin="round" strokeLinecap="round">
        <path d={minorRoads} strokeWidth="1.15" />
        <path d={majorRoads} strokeWidth="2" />
        <path d={motorway} strokeWidth="5" />
      </g>
      <path d={borders} fill="none" stroke="#636363" strokeWidth="2.8" strokeLinejoin="round" />
      <g fill="#27285c">
        {dots.map(([t, p, r], i) => {
          const [[x, y]] = project(t, p);
          return <circle key={i} cx={x} cy={y} r={r} />;
        })}
        {labels.map(([name, x0, x1, y, size]) => (
          <text key={name} x={x0} y={y} fontSize={size} textLength={x1 - x0} lengthAdjust="spacingAndGlyphs">{name}</text>
        ))}
        <text x="1863" y="762.5" fontSize="46" textLength="176" className="font-bold">Bolivia</text>
      </g>
      <g fill="none" stroke="#1a8cff">
        {[30, 150, 270].map((m) => (
          <g key={m}>
            <path d={arc(31, m, 42)} strokeWidth="9" opacity="0.5" />
            <path d={arc(40, m, 40)} strokeWidth="7" opacity="0.33" />
            <path d={arc(49, m, 38)} strokeWidth="7" opacity="0.15" />
          </g>
        ))}
      </g>
      <circle cx="1638" cy="725.3" r="24.5" fill="#1a8cff" />
      <text x="1635.3" y="732" fontSize="22" textAnchor="middle" className="font-['Liberation_Sans',sans-serif] font-bold">3</text>
    </svg>
  );
}

function ZoomControls() {
  return (
    <div className="absolute top-[496px] left-[1024px] flex h-[110px] w-14 flex-col items-center rounded-sm bg-white shadow-[0_1px_6px_rgba(0,0,0,0.3)]">
      <button aria-label="Zoom in" className="flex h-[54px] w-full items-center justify-center">
        <svg viewBox="0 0 22 22" className="size-[22px]"><path d="M11 0.5v21M0.5 11h21" stroke="#666" strokeWidth="6" /></svg>
      </button>
      <span className="h-0.5 w-[38px] bg-[#e6e6e6]" />
      <button aria-label="Zoom out" className="flex h-[54px] w-full items-center justify-center">
        <svg viewBox="0 0 22 22" className="size-[22px]"><path d="M0.5 11h21" stroke="#666" strokeWidth="6" /></svg>
      </button>
    </div>
  );
}

function Nav() {
  return (
    <nav className="flex h-[94px] border-b-2 border-[#e7e7e7] bg-white pl-[18px] text-[32px] leading-[82px] text-[#722730] [-webkit-text-stroke:0.8px]">
      <a className="w-[254px] tracking-[2.7px]"><span className="line-through decoration-[3px]">WorldBlog</span></a>
      <a className="w-[261px] tracking-[3px]">Add a Trip</a>
      <a className="w-[185px] tracking-[2.6px]">Profile</a>
      <a className="tracking-[2.3px]">Logout</a>
    </nav>
  );
}

type PostProps = { n: string; nw: string; title: string; tw: string; author: string; aw: string; date: string; ds: string; body: string; bs: string };

const posts: PostProps[] = [
  { n: "2", nw: "w-[22px]", title: "La Paz for First Timers", tw: "w-[455px] tracking-[1.9px]", author: "markjdvs", aw: "w-[189px] tracking-[2.2px]", date: "May 1, 2017", ds: "tracking-[1.04px]", body: "La Paz for First Timers First of all, you’ll notice the lack of oxygen in the air. Walk a few ...", bs: "tracking-[2.48px]" },
  { n: "2", nw: "w-[22px]", title: "What to Do?", tw: "w-[239px] tracking-[1.2px]", author: "markjdvs", aw: "w-[189px] tracking-[2.2px]", date: "May 1, 2017", ds: "tracking-[1.04px]", body: "Be sure to find a viewpoint – ‘Mirador’ – and see La Paz from above. It’s truly a sight for t...", bs: "tracking-[2.33px]" },
  { n: "1", nw: "w-[18px]", title: "Test Post 1", tw: "w-[212px] tracking-[0.9px]", author: "OmaoTzu", aw: "w-[187px] tracking-[1.6px]", date: "Apr 24, 2017", ds: "tracking-[1.6px]", body: "A blog (a truncation of the expression weblog)[1] is a discussion or informational website ...", bs: "tracking-[2.2px]" },
];

function Post(p: PostProps) {
  return (
    <article className="text-[31px] leading-[50px] whitespace-nowrap">
      <header className="flex h-[54px] font-bold text-[#387349]">
        <span className={"-indent-px border-y-2 border-black text-[30px] text-[#722730] " + p.nw}>{p.n}</span>
        <span className="ml-[71px] flex pt-0.5">
          <a className={"block text-[#1f3a7a] " + p.tw}>{p.title}</a>
          <span className="block w-6">-</span>
          <a className={"block text-[#1f3a7a] " + p.aw}>{p.author}</a>
          <time className={"block text-[30px] " + p.ds}>{p.date}</time>
        </span>
      </header>
      <p className={"h-[42px] overflow-hidden text-[32px] text-[#2f3133] [-webkit-text-stroke:0.6px] " + p.bs}>{p.body}</p>
    </article>
  );
}

export default function App() {
  return (
    <div className="min-h-[1856px] bg-[#fffffa] font-['DejaVu_Serif',serif]">
      <Nav />
      <main className="ml-[496px] w-[2280px] pt-20">
        <section className="relative mx-auto size-[1100px] overflow-hidden rounded-full">
          <WorldMap />
          <div className="absolute right-0 bottom-0 h-7 w-[448px] bg-[#f5f5f5]/70 pl-[11px] font-['Roboto',sans-serif] text-[20px] leading-7 text-[#444]">Map data ©2017 Google</div>
          <ZoomControls />
        </section>
        <section className="mt-12 flex flex-col gap-12">
          {posts.map((p) => <Post key={p.title} {...p} />)}
        </section>
      </main>
    </div>
  );
}
